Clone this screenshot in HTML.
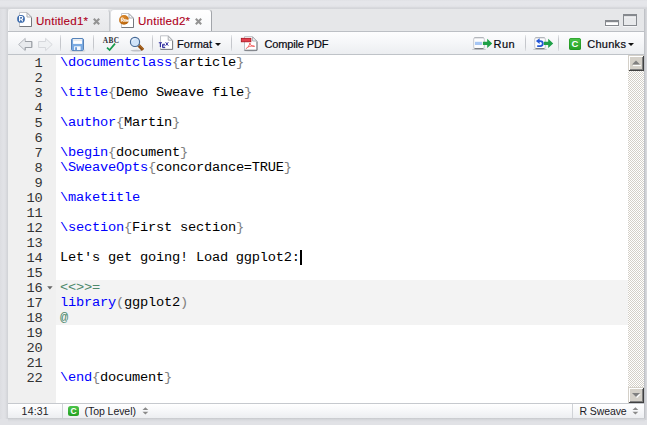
<!DOCTYPE html>
<html>
<head>
<meta charset="utf-8">
<title>RStudio Sweave</title>
<style>
html,body{margin:0;padding:0;}
body{width:647px;height:425px;overflow:hidden;position:relative;background:#e1e2e6;font-family:"Liberation Sans",sans-serif;}
.abs{position:absolute;}
svg{position:absolute;overflow:visible;}
#topbg{left:0;top:0;width:647px;height:9px;background:linear-gradient(#e0e1e5 0,#e5e6ea 1.5px,#e5e6ea 5px,#e1e2e6 6.5px,#d8d9dd 7.5px,#d2d4d8 9px);}
#leftbg{left:0;top:9px;width:8px;height:410px;background:linear-gradient(90deg,#dcdde1 0,#e1e2e6 3px,#e0e1e5 5px,#d8d9dd 6.5px,#cfd1d5 8px);}
#rightbg{left:644px;top:9px;width:3px;height:411px;background:linear-gradient(90deg,#b9bbc0,#cfd1d5 50%,#dadbdf);}
#botbg{left:8px;top:418px;width:637px;height:4px;background:linear-gradient(#c6c8cc 0,#d3d5d9 33%,#dcdde1 66%,#e1e2e6 100%);}
#panel{left:8px;top:9px;width:636px;height:409px;background:#e6e7e9;}
.tab{top:9px;box-sizing:border-box;border-radius:4px 4px 0 0;}
#tab1{left:8px;width:102px;height:22px;background:linear-gradient(#eeeff1,#e8e9eb);border:1px solid #f5f5f7;border-right-color:#c6c9cd;border-bottom:none;}
#tab2{left:110px;width:102px;height:23px;background:linear-gradient(#ffffff,#f7f8fa);border:1px solid #dcdee1;border-right-color:#a2a5aa;border-bottom:none;}
.tabtxt{top:14px;font-size:11.6px;letter-spacing:0.2px;color:#ae001c;-webkit-text-stroke:0.1px #ae001c;line-height:14px;white-space:nowrap;}
#toolbar{left:8px;top:31px;width:636px;height:24px;box-sizing:border-box;border-top:1px solid #bcbfc4;border-bottom:1px solid #bfc3c8;background:linear-gradient(#fdfdfe 0,#f5f6f8 50%,#eceef1 100%);}
.tsep{top:35px;width:1px;height:16px;background:linear-gradient(rgba(198,200,205,0.35),#c5c7cc 25%,#c5c7cc 75%,rgba(198,200,205,0.35));}
.ttxt{top:38px;font-size:11px;color:#08080f;-webkit-text-stroke:0.2px #08080f;line-height:13px;white-space:nowrap;}
.dd{width:0;height:0;border-left:3px solid transparent;border-right:3px solid transparent;border-top:3px solid #111;}
#gutter{left:8px;top:55px;width:48px;height:348px;background:#f0f0f0;}
#editor{left:56px;top:55px;width:572px;height:348px;background:#ffffff;}
#chunk{left:56px;top:280px;width:572px;height:45px;background:#f3f3f3;}
.ln{left:8px;width:34.6px;text-align:right;font-family:"Liberation Mono",monospace;font-size:13.7px;letter-spacing:-0.22px;line-height:15px;color:#333;height:15px;}
.code{left:60px;font-family:"Liberation Mono",monospace;font-size:13.7px;letter-spacing:-0.22px;line-height:15px;color:#000;height:15px;white-space:pre;}
.kw{color:#0000ff;}
.br{color:#808080;}
.gr{color:#4c886b;}
#scroll{left:628px;top:55px;width:16px;height:348px;background-color:#ffffff;background-image:linear-gradient(45deg,#d4d0c8 25%,transparent 25%,transparent 75%,#d4d0c8 75%),linear-gradient(45deg,#d4d0c8 25%,transparent 25%,transparent 75%,#d4d0c8 75%);background-size:2px 2px;background-position:0 0,1px 1px;}
.sbtn{left:628px;width:16px;height:16px;box-sizing:border-box;background:#d4d0c8;box-shadow:inset 1px 1px 0 #d4d0c8,inset -1px -1px 0 #404040,inset 2px 2px 0 #ffffff,inset -2px -2px 0 #808080;}
#status{left:8px;top:403px;width:636px;height:15px;box-sizing:border-box;border-top:1px solid #c6c9ce;background:linear-gradient(#ffffff 0,#f6f7f9 50%,#eceef1 100%);}
.stxt{top:405px;font-size:10.5px;color:#1c1a26;line-height:12px;white-space:nowrap;}
.ssep{top:404px;width:1px;height:14px;background:#d0d3d7;}
.cbadge{background:linear-gradient(#4cc44a,#22a022);border-radius:2.5px;color:#fff;font-weight:bold;text-align:center;}
</style>
</head>
<body>
<div class="abs" id="topbg"></div>
<div class="abs" id="leftbg"></div>
<div class="abs" id="rightbg"></div>
<div class="abs" id="botbg"></div>
<div class="abs" id="panel"></div>
<div class="abs tab" id="tab1"></div>
<div class="abs tab" id="tab2"></div>
<!-- tab 1 icon: R doc -->
<svg style="left:17px;top:12px;" width="16" height="16" viewBox="0 0 16 16">
  <path d="M2.5 0.5 H10 L14.5 5 V14.5 H2.5 Z" fill="#ffffff" stroke="#c4c6ca" stroke-width="1"/>
  <path d="M14.5 5.5 V14.5 H2.5" fill="none" stroke="#74777d" stroke-width="1"/>
  <path d="M10 0.8 V5 H14.2 Z" fill="#fbfbfc" stroke="#a2a5aa" stroke-width="0.9"/>
  <circle cx="4" cy="6.9" r="3.9" fill="#3d6cae"/>
  <path d="M2.6 9.3 V4.5 H4.4 A1.35 1.35 0 0 1 4.4 7.2 H2.6 M4.2 7.2 L5.8 9.3" fill="none" stroke="#fff" stroke-width="1.15"/>
</svg>
<div class="abs tabtxt" style="left:36px;">Untitled1*</div>
<svg style="left:93px;top:18px;" width="7" height="7" viewBox="0 0 7 7"><path d="M0.8 0.8 L6.2 6.2 M6.2 0.8 L0.8 6.2" stroke="#939393" stroke-width="2.1" fill="none"/></svg>
<!-- tab 2 icon: Rnw doc -->
<svg style="left:119px;top:13px;" width="16" height="16" viewBox="0 0 16 16">
  <path d="M2.5 0.5 H10 L14.5 5 V14.5 H2.5 Z" fill="#ffffff" stroke="#c4c6ca" stroke-width="1"/>
  <path d="M14.5 5.5 V14.5 H2.5" fill="none" stroke="#74777d" stroke-width="1"/>
  <path d="M10 0.8 V5 H14.2 Z" fill="#fbfbfc" stroke="#a2a5aa" stroke-width="0.9"/>
  <defs><radialGradient id="og" cx="40%" cy="30%" r="75%"><stop offset="0" stop-color="#e39030"/><stop offset="1" stop-color="#b35f08"/></radialGradient></defs>
  <circle cx="5" cy="6.9" r="4.9" fill="url(#og)"/>
  <path d="M2.3 8.8 V5 H3.5 A1 1 0 0 1 3.5 7 H2.3 M3.4 7 L4.4 8.8" fill="none" stroke="#fff" stroke-width="0.9"/>
  <path d="M5.2 8.8 V6.3 M5.2 7 Q6.6 5.7 6.7 7.2 V8.8" fill="none" stroke="#fff" stroke-width="0.95"/>
  <path d="M7.3 6.3 L7.9 8.6 L8.5 6.8 L9.1 8.6 L9.7 6.3" fill="none" stroke="#fff" stroke-width="0.85"/>
</svg>
<div class="abs tabtxt" style="left:138px;">Untitled2*</div>
<svg style="left:195px;top:18px;" width="7" height="7" viewBox="0 0 7 7"><path d="M0.8 0.8 L6.2 6.2 M6.2 0.8 L0.8 6.2" stroke="#939393" stroke-width="2.1" fill="none"/></svg>
<!-- min / max -->
<svg style="left:605px;top:13px;" width="34" height="15" viewBox="0 0 34 15">
  <rect x="0" y="13" width="14" height="1" fill="#f6f6f8"/>
  <rect x="18" y="13" width="14" height="1" fill="#f6f6f8"/>
  <rect x="0.5" y="7.5" width="13" height="5" fill="#ffffff" stroke="#86898e" stroke-width="1"/>
  <rect x="0" y="7" width="14" height="2.2" fill="#86898e"/>
  <rect x="18.5" y="1.5" width="13" height="11" fill="#e8e9eb" stroke="#86898e" stroke-width="1"/>
  <rect x="18" y="1" width="14" height="2.4" fill="#86898e"/>
  <rect x="19" y="3.4" width="12" height="1" fill="#f8f8fa"/>
</svg>
<div class="abs" id="toolbar"></div>
<!-- back / forward arrows -->
<svg style="left:18px;top:38px;" width="35" height="13" viewBox="0 0 35 13">
  <path d="M0.6 6.5 L7.2 0.4 V3.5 H13.8 V9.5 H7.2 V12.6 Z" fill="#e8eaed" stroke="#b4b7bd" stroke-width="1" stroke-linejoin="miter"/>
  <path d="M7.2 3.5 H13.8 V9.5 H7.2 V12" fill="none" stroke="#9ca0a6" stroke-width="1"/>
  <path d="M34.2 6.5 L27.6 0.4 V3.5 H20.6 V9.5 H27.6 V12.6 Z" fill="#eff1f3" stroke="#d6d8dc" stroke-width="1" stroke-linejoin="miter"/>
</svg>
<div class="abs tsep" style="left:60px;"></div>
<!-- save -->
<svg style="left:71px;top:38px;" width="13" height="14" viewBox="0 0 13 14">
  <ellipse cx="6.5" cy="12.9" rx="8" ry="0.8" fill="#b9bcc2" opacity="0.7"/>
  <path d="M1.3 0.5 H11.7 L12.5 1.3 V11.7 L11.7 12.5 H1.3 L0.5 11.7 V1.3 Z" fill="#7aaae2" stroke="#5682b8" stroke-width="1"/>
  <rect x="2.1" y="1.1" width="9" height="4.8" fill="#ffffff"/>
  <rect x="2.1" y="1.1" width="9" height="2" fill="#e9ebef"/>
  <rect x="3.1" y="8.3" width="6.5" height="3.8" fill="#f6f9fd"/>
  <rect x="4.2" y="9.2" width="1.7" height="2.9" fill="#5f92d4"/>
</svg>
<div class="abs tsep" style="left:93px;"></div>
<!-- spell check -->
<div class="abs" style="left:101px;top:35.6px;width:20px;text-align:center;font-family:'Liberation Serif',serif;font-weight:bold;font-size:7.3px;line-height:10px;color:#2e2e34;letter-spacing:0.45px;text-indent:0.45px;">ABC</div>
<svg style="left:106px;top:43px;" width="10" height="8" viewBox="0 0 10 8"><path d="M1 4.6 L3.6 7 L9 0.6" fill="none" stroke="#189a4c" stroke-width="1.7" stroke-linecap="butt"/></svg>
<!-- magnifier -->
<svg style="left:129px;top:36px;" width="18" height="16" viewBox="0 0 18 16">
  <ellipse cx="7.5" cy="14.6" rx="6" ry="0.9" fill="#b4b7bd" opacity="0.8"/>
  <path d="M9.4 9.2 L14 13.8" stroke="#8a4c12" stroke-width="3.2" stroke-linecap="butt"/>
  <path d="M9.9 8.7 L14.5 13.3" stroke="#b06a24" stroke-width="1.2" stroke-linecap="butt"/>
  <path d="M8.6 8.4 L10 9.8" stroke="#8d97a3" stroke-width="2"/>
  <circle cx="6" cy="5.9" r="4.6" fill="#cfe3f9" stroke="#456894" stroke-width="1.15"/>
  <path d="M3 5.2 A3.2 3.2 0 0 1 6.6 2.7" fill="none" stroke="#ffffff" stroke-width="1" opacity="0.7"/>
</svg>
<div class="abs tsep" style="left:152px;"></div>
<!-- TeX doc -->
<svg style="left:158px;top:35px;" width="17" height="16" viewBox="0 0 17 16">
  <path d="M2.5 0.8 H10.2 L14.6 5.2 V14.4 H2.5 Z" fill="#ffffff" stroke="#c0c3c8" stroke-width="1"/>
  <path d="M14.6 5.6 V14.4 H2.5" fill="none" stroke="#797c82" stroke-width="1"/>
  <path d="M10.2 1.1 V5.2 H14.3 Z" fill="#f4f5f6" stroke="#a4a7ac" stroke-width="0.9"/>
  <path d="M0.8 7.7 H4 M2.4 7.7 V12" fill="none" stroke="#2c2a9c" stroke-width="1.15"/>
  <path d="M7 9.3 H4.6 V12.6 H7.2 M4.6 10.9 H6.7" fill="none" stroke="#2c2a9c" stroke-width="1"/>
  <path d="M7.6 7.2 L10.3 10.7 M10.3 7.2 L7.6 10.7" fill="none" stroke="#2c2a9c" stroke-width="0.95"/>
</svg>
<div class="abs ttxt" style="left:177px;letter-spacing:0.05px;">Format</div>
<div class="abs dd" style="left:215px;top:43px;"></div>
<div class="abs tsep" style="left:231px;"></div>
<!-- PDF doc -->
<svg style="left:241px;top:36px;" width="17" height="15" viewBox="0 0 17 15">
  <ellipse cx="9.5" cy="14.7" rx="7" ry="0.7" fill="#b9bcc2" opacity="0.7"/>
  <path d="M3.5 0.6 H11.6 L16 5 V14.3 H3.5 Z" fill="#ffffff" stroke="#c0c3c8" stroke-width="1"/>
  <path d="M16 5.5 V14.3 H3.5" fill="none" stroke="#74777d" stroke-width="1"/>
  <path d="M11.6 0.9 V5 H15.7 Z" fill="#f4f5f6" stroke="#a4a7ac" stroke-width="0.9"/>
  <rect x="0.3" y="2.3" width="9.6" height="3.5" fill="#e2404e" stroke="#a8101c" stroke-width="0.8"/>
  <path d="M4.8 12.8 C6.6 11.8 8.4 9.6 8.9 7 C9.1 8.8 10.6 10.2 13.6 10.3 M6.8 11.1 C9 10 11.2 9.8 13.6 10.3" fill="none" stroke="#ee4a4a" stroke-width="0.85"/>
</svg>
<div class="abs ttxt" style="left:264.5px;letter-spacing:-0.15px;">Compile PDF</div>
<!-- Run -->
<svg style="left:472px;top:37px;" width="21" height="13" viewBox="0 0 21 13">
  <ellipse cx="7" cy="12.3" rx="7.2" ry="0.8" fill="#a9acb2" opacity="0.8"/>
  <rect x="1.7" y="0.7" width="10.6" height="10.8" rx="1.4" fill="#fdfdfe" stroke="#c6c9ce" stroke-width="1"/>
  <path d="M2.4 0.7 H11.6" stroke="#aeb1b6" stroke-width="1"/>
  <path d="M2.6 11.5 H11.4" stroke="#7c7f85" stroke-width="1"/>
  <rect x="3" y="4.8" width="6.9" height="3.2" fill="#a6c6f4"/>
  <path d="M10.9 4.8 H15.2 V1.7 L20.2 6.4 L15.2 11.1 V8 H10.9 Z" fill="#1fa048"/>
</svg>
<div class="abs ttxt" style="left:493.6px;letter-spacing:0.45px;">Run</div>
<div class="abs tsep" style="left:525px;"></div>
<!-- Re-run -->
<svg style="left:533px;top:37px;" width="21" height="13" viewBox="0 0 21 13">
  <ellipse cx="7" cy="12.3" rx="7.2" ry="0.8" fill="#a9acb2" opacity="0.8"/>
  <rect x="1.7" y="0.7" width="10.6" height="10.8" rx="1.4" fill="#fdfdfe" stroke="#c6c9ce" stroke-width="1"/>
  <path d="M2.4 0.7 H11.6" stroke="#aeb1b6" stroke-width="1"/>
  <path d="M2.6 11.5 H11.4" stroke="#7c7f85" stroke-width="1"/>
  <path d="M5.4 4.1 H7.3 A2.5 2.5 0 0 1 7.3 9.1 H4.2" fill="none" stroke="#2457d6" stroke-width="1.8"/>
  <path d="M6.6 1.2 L2.9 4.1 L6.6 7 Z" fill="#2457d6"/>
  <path d="M10.9 4.8 H15.2 V1.7 L20.2 6.4 L15.2 11.1 V8 H10.9 Z" fill="#1fa048"/>
</svg>
<div class="abs tsep" style="left:558px;"></div>
<!-- Chunks -->
<div class="abs cbadge" style="left:569px;top:38px;width:12px;height:12px;font-size:9.5px;line-height:12.5px;box-shadow:0 0 0 0.5px #1d8e1d inset;">C</div>
<div class="abs ttxt" style="left:587.2px;letter-spacing:0.28px;">Chunks</div>
<div class="abs dd" style="left:628px;top:43px;"></div>
<div class="abs" id="gutter"></div>
<div class="abs" id="editor"></div>
<div class="abs" id="chunk"></div>
<svg style="left:46.6px;top:286px;" width="6" height="4" viewBox="0 0 6 4"><path d="M0.2 0.2 H5.6 L2.9 3.5 Z" fill="#666"/></svg>
<div class="abs" id="cursor" style="left:300px;top:250px;width:2px;height:15px;background:#000;"></div>
<div id="lines">
<div class="abs ln" style="top:56px;">1</div>
<div class="abs code" style="top:55px;"><span class="kw">\documentclass</span><span class="br">{</span>article<span class="br">}</span></div>
<div class="abs ln" style="top:71px;">2</div>
<div class="abs ln" style="top:86px;">3</div>
<div class="abs code" style="top:85px;"><span class="kw">\title</span><span class="br">{</span>Demo Sweave file<span class="br">}</span></div>
<div class="abs ln" style="top:101px;">4</div>
<div class="abs ln" style="top:116px;">5</div>
<div class="abs code" style="top:115px;"><span class="kw">\author</span><span class="br">{</span>Martin<span class="br">}</span></div>
<div class="abs ln" style="top:131px;">6</div>
<div class="abs ln" style="top:146px;">7</div>
<div class="abs code" style="top:145px;"><span class="kw">\begin</span><span class="br">{</span>document<span class="br">}</span></div>
<div class="abs ln" style="top:161px;">8</div>
<div class="abs code" style="top:160px;"><span class="kw">\SweaveOpts</span><span class="br">{</span>concordance=TRUE<span class="br">}</span></div>
<div class="abs ln" style="top:176px;">9</div>
<div class="abs ln" style="top:191px;">10</div>
<div class="abs code" style="top:190px;"><span class="kw">\maketitle</span></div>
<div class="abs ln" style="top:206px;">11</div>
<div class="abs ln" style="top:221px;">12</div>
<div class="abs code" style="top:220px;"><span class="kw">\section</span><span class="br">{</span>First section<span class="br">}</span></div>
<div class="abs ln" style="top:236px;">13</div>
<div class="abs ln" style="top:251px;">14</div>
<div class="abs code" style="top:250px;">Let's get going! Load ggplot2:</div>
<div class="abs ln" style="top:266px;">15</div>
<div class="abs ln" style="top:281px;">16</div>
<div class="abs code" style="top:280px;"><span class="gr">&lt;&lt;&gt;&gt;=</span></div>
<div class="abs ln" style="top:296px;">17</div>
<div class="abs code" style="top:295px;"><span class="kw">library</span><span class="br">(</span>ggplot2<span class="br">)</span></div>
<div class="abs ln" style="top:311px;">18</div>
<div class="abs code" style="top:310px;"><span class="gr">@</span></div>
<div class="abs ln" style="top:326px;">19</div>
<div class="abs ln" style="top:341px;">20</div>
<div class="abs ln" style="top:356px;">21</div>
<div class="abs ln" style="top:371px;">22</div>
<div class="abs code" style="top:370px;"><span class="kw">\end</span><span class="br">{</span>document<span class="br">}</span></div>
</div><!--/lines-->
<div class="abs" id="scroll"></div>
<div class="abs sbtn" style="top:55px;"></div>
<svg style="left:632px;top:60px;" width="9" height="6" viewBox="0 0 9 6"><path d="M1 5.6 H9" stroke="#fff" stroke-width="1"/><path d="M0 4.5 L4 0.5 L8 4.5 Z" fill="#808080"/></svg>
<div class="abs sbtn" style="top:387px;"></div>
<svg style="left:632px;top:393px;" width="9" height="6" viewBox="0 0 9 6"><path d="M1.2 1 L5 5 L8.8 1.2 Z" fill="#fff"/><path d="M0 0 H8 L4 4 Z" fill="#808080"/></svg>
<div class="abs" id="status"></div>
<div class="abs stxt" style="left:21.6px;letter-spacing:0.2px;">14:31</div>
<div class="abs ssep" style="left:62px;"></div>
<div class="abs cbadge" style="left:68px;top:406px;width:11px;height:10px;font-size:8.5px;line-height:10.5px;">C</div>
<div class="abs stxt" style="left:84.5px;letter-spacing:-0.05px;">(Top Level)</div>
<svg style="left:142px;top:407px;" width="7" height="8" viewBox="0 0 7 8"><path d="M0.5 3 L3.4 0.2 L6.3 3 Z M0.5 4.8 H6.3 L3.4 7.6 Z" fill="#8a8a8a"/></svg>
<div class="abs ssep" style="left:572px;"></div>
<div class="abs stxt" style="left:579.5px;letter-spacing:-0.1px;">R Sweave</div>
<svg style="left:632px;top:407px;" width="7" height="8" viewBox="0 0 7 8"><path d="M0.5 3 L3.4 0.2 L6.3 3 Z M0.5 4.8 H6.3 L3.4 7.6 Z" fill="#8a8a8a"/></svg>
</body>
</html>
